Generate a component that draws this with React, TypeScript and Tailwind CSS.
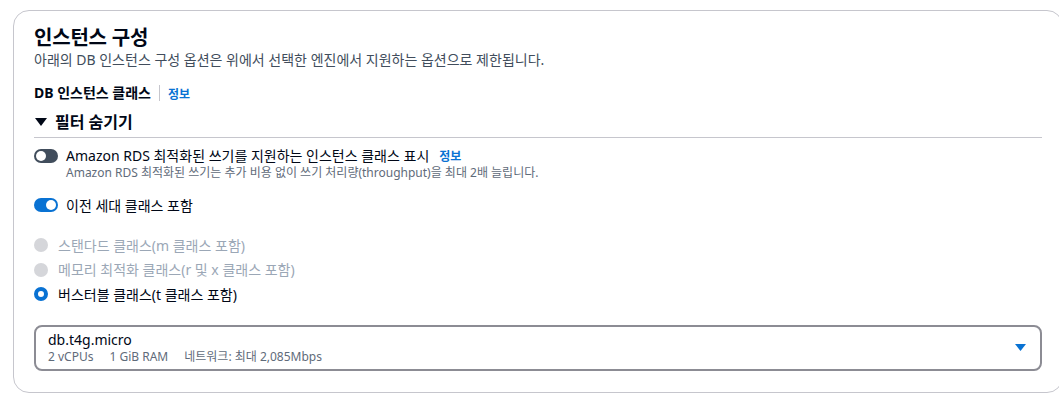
import React from "react";

const font = { fontFamily: '"Noto Sans", "Noto Sans CJK KR", sans-serif' };

function Toggle({ on }: { on: boolean }) {
  return (
    <div
      className={`relative w-[24px] h-[14px] rounded-full shrink-0 ${on ? "bg-[#0972d3]" : "bg-[#414d5c]"}`}
    >
      <div
        className={`absolute top-[2px] w-[10px] h-[10px] rounded-full bg-white ${on ? "left-[12px]" : "left-[2px]"}`}
      />
    </div>
  );
}

function Radio({ state }: { state: "disabled" | "checked" }) {
  if (state === "checked")
    return (
      <div className="w-[14px] h-[14px] rounded-full border-[4px] border-[#0972d3] bg-white shrink-0" />
    );
  return <div className="w-[14px] h-[14px] rounded-full bg-[#d5d6da] shrink-0" />;
}

export default function App() {
  return (
    <div className="bg-white w-[1059px] h-[402px] overflow-hidden pt-[10px] pl-[13px]" style={font}>
      <div className="w-[1050px] h-[383px] border border-[#c6c6cd] rounded-[16px] px-5 pt-[13px] text-[#000716]">
        <div className="text-[20px] font-bold leading-[28px] tracking-[-0.2px]">인스턴스 구성</div>
        <div className="text-[14px] leading-[22px] text-[#414d5c] mt-[-3px]">
          아래의 DB 인스턴스 구성 옵션은 위에서 선택한 엔진에서 지원하는 옵션으로 제한됩니다.
        </div>
        <div className="flex items-center mt-[11px] h-[22px]">
          <span className="font-bold text-[14px] leading-[22px]">DB 인스턴스 클래스</span>
          <span className="mx-[8px] w-px h-[16px] bg-[#c6c6cd]" />
          <span className="font-bold text-[#0972d3] text-[12px] leading-[22px] pt-[3px]">정보</span>
        </div>
        <div className="flex items-center mt-[6px] h-[24px]">
          <svg width="12" height="10" viewBox="0 0 12 10" className="ml-[1px] mr-[8px]">
            <path d="M0 1 H12 L6 9 Z" fill="#000716" />
          </svg>
          <span className="text-[16px] font-bold">필터 숨기기</span>
        </div>
        <div className="mt-[3px] h-px bg-[#c6c6cd] w-[1008px]" />

        <div className="flex items-start mt-[9px]">
          <div className="mt-[2px] mr-[8px]">
            <Toggle on={false} />
          </div>
          <div>
            <div className="flex items-baseline h-[18px] text-[14px] leading-[18px]">
              <span>Amazon RDS 최적화된 쓰기를 지원하는 인스턴스 클래스 표시</span>
              <span className="ml-[10px] font-bold text-[#0972d3] text-[12px]">정보</span>
            </div>
            <div className="text-[12px] leading-[16px] text-[#5f6b7a]">
              Amazon RDS 최적화된 쓰기는 추가 비용 없이 쓰기 처리량(throughput)을 최대 2배 늘립니다.
            </div>
          </div>
        </div>

        <div className="flex items-center mt-[14px] h-[20px]">
          <div className="mr-[8px]">
            <Toggle on={true} />
          </div>
          <span className="text-[14px]">이전 세대 클래스 포함</span>
        </div>

        <div className="mt-[20px] flex flex-col gap-[4.5px]">
          <div className="flex items-center h-[20px]">
            <Radio state="disabled" />
            <span className="ml-[10px] text-[14px] text-[#9ba7b6]">스탠다드 클래스(m 클래스 포함)</span>
          </div>
          <div className="flex items-center h-[20px]">
            <Radio state="disabled" />
            <span className="ml-[10px] text-[14px] text-[#9ba7b6]">메모리 최적화 클래스(r 및 x 클래스 포함)</span>
          </div>
          <div className="flex items-center h-[20px]">
            <Radio state="checked" />
            <span className="ml-[10px] text-[14px]">버스터블 클래스(t 클래스 포함)</span>
          </div>
        </div>

        <div className="mt-[21px] w-[1008px] h-[46px] border-2 border-[#8c8c94] rounded-[8px] flex items-center justify-between pl-[12px] pr-[14px]">
          <div className="flex flex-col">
            <span className="text-[14px] leading-[18px]">db.t4g.micro</span>
            <div className="flex text-[12px] leading-[16px] text-[#5f6b7a] gap-[16px]">
              <span>2 vCPUs</span>
              <span>1 GiB RAM</span>
              <span>네트워크: 최대 2,085Mbps</span>
            </div>
          </div>
          <svg width="11" height="8" viewBox="0 0 11 8">
            <path d="M0 0 H11 L5.5 7 Z" fill="#0972d3" />
          </svg>
        </div>
      </div>
    </div>
  );
}
